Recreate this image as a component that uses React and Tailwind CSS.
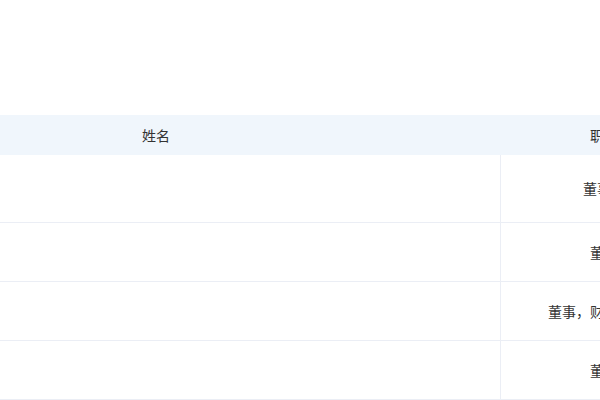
export default function App() {
  const rows = [
    { name: "", title: "董事长", h: "h-[68px]" },
    { name: "", title: "董事", h: "h-[59px]" },
    { name: "", title: "董事，财务负责人", h: "h-[59px]" },
    { name: "", title: "董事", h: "h-[59px]" },
  ];
  return (
    <div
      className="w-[600px] h-[400px] overflow-hidden bg-white pt-[115px]"
      style={{ fontFamily: '"Noto Sans CJK SC", "Noto Sans", sans-serif' }}
    >
      <div className="ml-[-189px] w-[896px] text-[14px] text-[#333]">
        <div className="flex h-[40px] bg-[#f0f6fc]">
          <div className="w-[690px] flex items-center justify-center">姓名</div>
          <div className="w-[206px] flex items-center justify-center whitespace-nowrap">职务</div>
        </div>
        {rows.map((r, i) => (
          <div key={i} className={`flex ${r.h} border-b border-[#ebeef5]`}>
            <div className="w-[690px] border-r border-[#ebeef5] flex items-center justify-center">
              {r.name}
            </div>
            <div className="w-[206px] flex items-center justify-center whitespace-nowrap">
              {r.title}
            </div>
          </div>
        ))}
      </div>
    </div>
  );
}
